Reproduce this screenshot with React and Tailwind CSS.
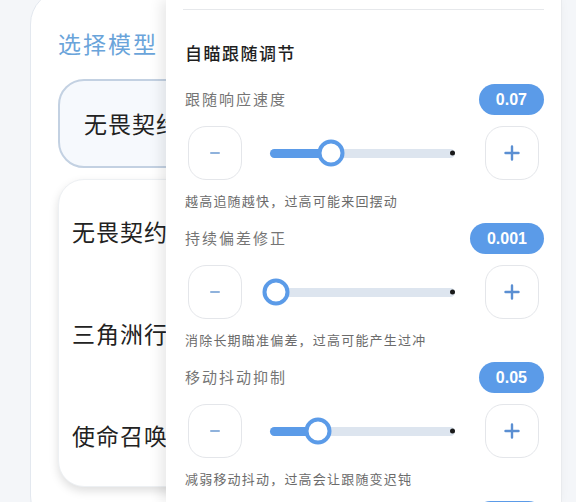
const font = { fontFamily: '"Noto Sans CJK SC", "Noto Sans", sans-serif' };

const rows = [
  { label: "跟随响应速度", value: "0.07", pct: 33, desc: "越高追随越快，过高可能来回摆动" },
  { label: "持续偏差修正", value: "0.001", pct: 3, desc: "消除长期瞄准偏差，过高可能产生过冲" },
  { label: "移动抖动抑制", value: "0.05", pct: 26, desc: "减弱移动抖动，过高会让跟随变迟钝" },
];

function StepButton({ plus }) {
  return (
    <button className="w-[54px] h-[54px] shrink-0 rounded-[18px] border-[1.5px] border-[#e4e6ea] bg-white flex items-center justify-center">
      {plus ? (
        <svg width="16" height="16" viewBox="0 0 16 16">
          <path d="M8 1.5v13M1.5 8h13" stroke="#5b8fd2" strokeWidth="2.4" strokeLinecap="round" />
        </svg>
      ) : (
        <svg width="10" height="4" viewBox="0 0 10 4">
          <path d="M1 2h8" stroke="#8fb2dc" strokeWidth="2" strokeLinecap="round" />
        </svg>
      )}
    </button>
  );
}

function SliderRow({ row }) {
  return (
    <div className="flex flex-col">
      <div className="h-[31px] flex items-center justify-between">
        <span className="text-[15px] text-[#757575] tracking-[2px]">{row.label}</span>
        <span className="h-[31px] px-[17px] rounded-full bg-[#5b9be8] text-white text-[16px] font-bold flex items-center" style={{ fontFamily: '"Liberation Sans", Arial, sans-serif' }}>
          {row.value}
        </span>
      </div>
      <div className="mt-[11px] flex items-center pl-[3px] pr-[5px]">
        <StepButton />
        <div className="flex-1 ml-[28px] mr-[30px] relative h-[9px] rounded-full bg-[#dde5ef]">
          <div className="absolute left-0 top-0 h-full rounded-full bg-[#5b9be8]" style={{ width: `${row.pct}%` }} />
          <div
            className="absolute top-1/2 -translate-x-1/2 -translate-y-1/2 w-[27px] h-[27px] rounded-full bg-white border-[4.5px] border-[#5b9be8]"
            style={{ left: `${row.pct}%` }}
          />
          <div className="absolute right-[0px] top-1/2 -translate-y-1/2 w-[5px] h-[5px] rounded-full bg-[#1a1a1a]" />
        </div>
        <StepButton plus />
      </div>
      <p className="mt-[12px] text-[13px] leading-[17px] text-[#6b6b6b] tracking-[1.2px]">{row.desc}</p>
    </div>
  );
}

export default function App() {
  return (
    <div className="relative w-[576px] h-[502px] overflow-hidden bg-[#f4f6f9]" style={font}>
      <div className="pl-[30px]">
        <div className="-mt-[10px] w-[520px] h-[540px] rounded-[34px] border border-[#e3e8ef] bg-white px-[27px] pt-[36px]">
          <h2 className="text-[23px] leading-[32px] text-[#6aa4da] tracking-[2px]">选择模型</h2>
          <div className="mt-[20px] h-[89px] rounded-[26px] border-2 border-[#c3d1e2] bg-[#f6f9fd] flex items-center pl-[24px]">
            <span className="text-[23px] text-[#222] tracking-[1px]">无畏契约</span>
          </div>
          <div className="mt-[11px] rounded-[26px] border border-[#edf0f3] bg-white shadow-[0_4px_10px_rgba(0,0,0,0.13)] pl-[13px]">
            {["无畏契约", "三角洲行动", "使命召唤"].map((t) => (
              <div key={t} className="h-[102px] flex items-center">
                <span className="text-[23px] text-[#222] tracking-[1px]">{t}</span>
              </div>
            ))}
          </div>
        </div>
      </div>

      <div className="absolute top-0 left-[166px] w-[396px] h-full bg-white shadow-[-5px_0_12px_rgba(0,0,0,0.09)] border-r border-[#e9ebee] pl-[19px] pr-[17px]">
        <div className="ml-[-2px] mt-[9px] h-px bg-[#e6e8eb]" />
        <h3 className="mt-[30px] text-[17px] leading-[26px] font-medium text-[#1f1f1f] tracking-[1.5px]">自瞄跟随调节</h3>
        <div className="mt-[18px] flex flex-col gap-[14px]">
          {rows.map((r) => (
            <SliderRow key={r.label} row={r} />
          ))}
          <div className="flex justify-end">
            <div className="w-[69px] h-[31px] rounded-full bg-[#5b9be8]" />
          </div>
        </div>
      </div>
    </div>
  );
}
